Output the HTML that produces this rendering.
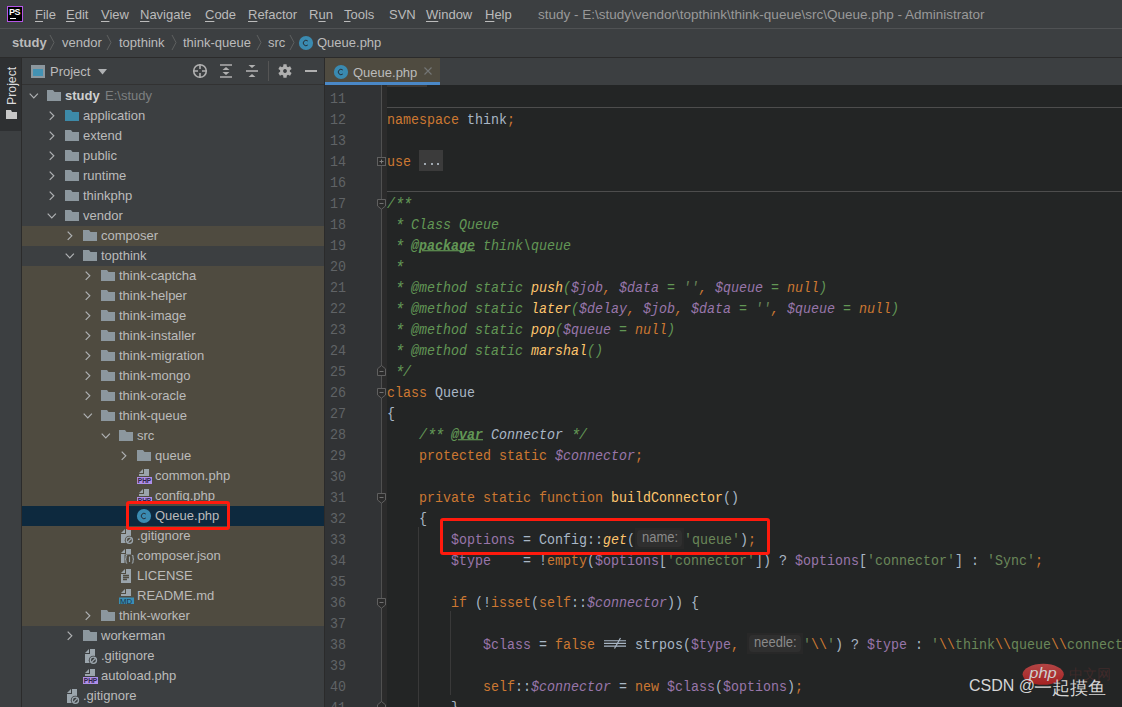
<!DOCTYPE html><html><head><meta charset="utf-8"><style>
*{margin:0;padding:0;box-sizing:border-box}
html,body{width:1122px;height:707px;overflow:hidden;background:#3c3f41;font-family:"Liberation Sans",sans-serif;font-size:13px;color:#bbbbbb}
.a{position:absolute;white-space:pre}
.ui{font-family:"Liberation Sans",sans-serif;font-size:13px}
.m{font-family:"Liberation Mono",monospace;font-size:13.333px;transform:scaleY(1.15);transform-origin:0 13px}
u{text-decoration:underline;text-underline-offset:2px}
.k{color:#cc7832} .d{color:#a9b7c6} .v{color:#9876aa} .f{color:#ffc66d} .s{color:#6a8759}
.c{color:#629755;font-style:italic} .i{font-style:italic} .st{position:relative;top:2px;font-size:15.5px;line-height:1px;display:inline-block;width:8px;text-align:center} .b{font-weight:bold}
.tag{text-decoration:underline;font-weight:bold;text-underline-offset:0px;text-decoration-thickness:1px}
.hint{background:#3b3b3b;color:#787878;font-family:"Liberation Sans",sans-serif;font-size:12px;border-radius:3px}
</style></head><body>
<div class="a" style="left:0;top:0;width:1122px;height:28px;background:#3c3f41"></div>
<div class="a" style="left:7px;top:6px;width:16px;height:16px;background:#000;border:1px solid #b456e6"></div>
<div class="a" style="left:9px;top:7px;font:bold 9px 'Liberation Sans',sans-serif;color:#fff;letter-spacing:-0.5px">PS</div>
<div class="a" style="left:10px;top:18px;width:6px;height:1px;background:#fff"></div>
<div class="a ui" style="left:35px;top:7px;color:#bbbbbb"><u>F</u>ile</div>
<div class="a ui" style="left:66px;top:7px;color:#bbbbbb"><u>E</u>dit</div>
<div class="a ui" style="left:101px;top:7px;color:#bbbbbb"><u>V</u>iew</div>
<div class="a ui" style="left:140px;top:7px;color:#bbbbbb"><u>N</u>avigate</div>
<div class="a ui" style="left:205px;top:7px;color:#bbbbbb"><u>C</u>ode</div>
<div class="a ui" style="left:248px;top:7px;color:#bbbbbb"><u>R</u>efactor</div>
<div class="a ui" style="left:309px;top:7px;color:#bbbbbb">R<u>u</u>n</div>
<div class="a ui" style="left:344px;top:7px;color:#bbbbbb"><u>T</u>ools</div>
<div class="a ui" style="left:389px;top:7px;color:#bbbbbb">SVN</div>
<div class="a ui" style="left:426px;top:7px;color:#bbbbbb"><u>W</u>indow</div>
<div class="a ui" style="left:485px;top:7px;color:#bbbbbb"><u>H</u>elp</div>
<div class="a ui" style="left:538px;top:7px;color:#999999;font-size:13.5px">study - E:\study\vendor\topthink\think-queue\src\Queue.php - Administrator</div>
<div class="a" style="left:0;top:28px;width:1122px;height:1px;background:#505254"></div>
<div class="a ui" style="left:12px;top:35px;color:#bbbbbb;font-weight:bold">study</div>
<div class="a ui" style="left:62px;top:35px;color:#bbbbbb;">vendor</div>
<div class="a ui" style="left:119px;top:35px;color:#bbbbbb;">topthink</div>
<div class="a ui" style="left:183px;top:35px;color:#bbbbbb;">think-queue</div>
<div class="a ui" style="left:268px;top:35px;color:#bbbbbb;">src</div>
<svg class="a" style="left:49px;top:34px" width="6" height="17"><path d="M1 1 L5 8.5 L1 16" fill="none" stroke="#5e6060" stroke-width="1"/></svg>
<svg class="a" style="left:106px;top:34px" width="6" height="17"><path d="M1 1 L5 8.5 L1 16" fill="none" stroke="#5e6060" stroke-width="1"/></svg>
<svg class="a" style="left:171px;top:34px" width="6" height="17"><path d="M1 1 L5 8.5 L1 16" fill="none" stroke="#5e6060" stroke-width="1"/></svg>
<svg class="a" style="left:256px;top:34px" width="6" height="17"><path d="M1 1 L5 8.5 L1 16" fill="none" stroke="#5e6060" stroke-width="1"/></svg>
<svg class="a" style="left:289px;top:34px" width="6" height="17"><path d="M1 1 L5 8.5 L1 16" fill="none" stroke="#5e6060" stroke-width="1"/></svg>
<svg class="a" style="left:299px;top:36px" width="14" height="14" viewBox="0 0 14 14" overflow="visible"><circle cx="7" cy="7" r="7.1" fill="#3a8ab0"/><path d="M8.8 5 A2.7 2.7 0 1 0 8.8 9" fill="none" stroke="#26323b" stroke-width="1"/></svg>
<div class="a ui" style="left:317px;top:35px;color:#bbbbbb">Queue.php</div>
<div class="a" style="left:0;top:57px;width:1122px;height:1px;background:#2b2b2b"></div>
<div class="a" style="left:0;top:58px;width:21px;height:649px;background:#3c3f41"></div>
<div class="a" style="left:0;top:58px;width:21px;height:73px;background:#2e3032"></div>
<div class="a" style="left:21px;top:58px;width:1px;height:649px;background:#2b2b2b"></div>
<div class="a ui" style="left:5px;top:105px;transform-origin:0 0;transform:rotate(-90deg);color:#dddddd;font-size:12.3px">Project</div>
<svg class="a" style="left:6px;top:110px" width="12" height="10"><path d="M0 0 H5 L6 2 H11 V9 H0 Z" fill="#c8c8c8"/></svg>
<div class="a" style="left:22px;top:58px;width:302px;height:649px;background:#3c3f41"></div>
<div class="a" style="left:22px;top:84px;width:302px;height:1px;background:#323232"></div>
<div class="a" style="left:324px;top:58px;width:1px;height:649px;background:#2b2b2b"></div>
<svg class="a" style="left:31px;top:65px" width="14" height="14"><path fill="#8c979e" fill-rule="evenodd" d="M0 0 H14 V13 H0 Z M2 4 V11 H12 V4 Z"/><rect x="2" y="4" width="10" height="7" fill="#4392b3"/></svg>
<div class="a ui" style="left:50px;top:64px;color:#bbbbbb">Project</div>
<svg class="a" style="left:98px;top:69px" width="10" height="6"><path d="M0 0 H9 L4.5 5.5 Z" fill="#afb1b3"/></svg>
<svg class="a" style="left:192px;top:63px" width="16" height="16"><circle cx="8" cy="8" r="6.3" fill="none" stroke="#b0b0b0" stroke-width="1.6"/><path d="M8 1 V6 M8 10 V15 M1 8 H6 M10 8 H15" stroke="#b0b0b0" stroke-width="1.6"/></svg>
<svg class="a" style="left:220px;top:64px" width="13" height="14"><path d="M0 1 H12 M0 13 H12" stroke="#b0b0b0" stroke-width="1.6"/><path d="M6 3 L9.5 6 H2.5 Z M6 11 L9.5 8 H2.5 Z" fill="#b0b0b0"/></svg>
<svg class="a" style="left:246px;top:64px" width="13" height="14"><path d="M0 7 H12" stroke="#b0b0b0" stroke-width="1.6"/><path d="M2.5 1 H9.5 L6 4 Z M6 10 L9.5 13 H2.5 Z" fill="#b0b0b0"/></svg>
<div class="a" style="left:268px;top:61px;width:1px;height:20px;background:#555555"></div>
<svg class="a" style="left:278px;top:64px" width="14" height="14" viewBox="0 0 14 14"><path fill="#b0b0b0" fill-rule="evenodd" d="M5.16 2.46 L5.45 0.28 L8.55 0.28 L8.84 2.46 L10.02 3.14 L12.05 2.29 L13.60 4.98 L11.85 6.32 L11.85 7.68 L13.60 9.02 L12.05 11.71 L10.02 10.86 L8.84 11.54 L8.55 13.72 L5.45 13.72 L5.16 11.54 L3.98 10.86 L1.95 11.71 L0.40 9.02 L2.15 7.68 L2.15 6.32 L0.40 4.98 L1.95 2.29 L3.98 3.14 Z M7 5.1 A1.9 1.9 0 1 0 7.01 5.1 Z"/></svg>
<div class="a" style="left:305px;top:70px;width:12px;height:2px;background:#b0b0b0"></div>
<svg class="a" style="left:29px;top:93px" width="10" height="7"><path d="M0.7 0.7 L4.8 4.8 L8.9 0.7" fill="none" stroke="#afb1b3" stroke-width="1.2"/></svg>
<svg class="a" style="left:47px;top:90px" width="14" height="12"><path d="M0 0 H6 L7.5 2 H14 V11 H0 Z" fill="#8c979e"/></svg>
<div class="a ui" style="left:65px;top:88px;color:#bbbbbb;font-weight:bold;color:#cfcfcf;">study</div>
<div class="a ui" style="left:105px;top:88px;color:#7d7f80">E:\study</div>
<svg class="a" style="left:49px;top:111px" width="7" height="10"><path d="M0.7 0.7 L4.8 4.8 L0.7 8.9" fill="none" stroke="#afb1b3" stroke-width="1.2"/></svg>
<svg class="a" style="left:65px;top:110px" width="14" height="12"><path d="M0 0 H6 L7.5 2 H14 V11 H0 Z" fill="#3d8aa8"/></svg>
<div class="a ui" style="left:83px;top:108px;color:#bbbbbb;">application</div>
<svg class="a" style="left:49px;top:131px" width="7" height="10"><path d="M0.7 0.7 L4.8 4.8 L0.7 8.9" fill="none" stroke="#afb1b3" stroke-width="1.2"/></svg>
<svg class="a" style="left:65px;top:130px" width="14" height="12"><path d="M0 0 H6 L7.5 2 H14 V11 H0 Z" fill="#8c979e"/></svg>
<div class="a ui" style="left:83px;top:128px;color:#bbbbbb;">extend</div>
<svg class="a" style="left:49px;top:151px" width="7" height="10"><path d="M0.7 0.7 L4.8 4.8 L0.7 8.9" fill="none" stroke="#afb1b3" stroke-width="1.2"/></svg>
<svg class="a" style="left:65px;top:150px" width="14" height="12"><path d="M0 0 H6 L7.5 2 H14 V11 H0 Z" fill="#8c979e"/></svg>
<div class="a ui" style="left:83px;top:148px;color:#bbbbbb;">public</div>
<svg class="a" style="left:49px;top:171px" width="7" height="10"><path d="M0.7 0.7 L4.8 4.8 L0.7 8.9" fill="none" stroke="#afb1b3" stroke-width="1.2"/></svg>
<svg class="a" style="left:65px;top:170px" width="14" height="12"><path d="M0 0 H6 L7.5 2 H14 V11 H0 Z" fill="#8c979e"/></svg>
<div class="a ui" style="left:83px;top:168px;color:#bbbbbb;">runtime</div>
<svg class="a" style="left:49px;top:191px" width="7" height="10"><path d="M0.7 0.7 L4.8 4.8 L0.7 8.9" fill="none" stroke="#afb1b3" stroke-width="1.2"/></svg>
<svg class="a" style="left:65px;top:190px" width="14" height="12"><path d="M0 0 H6 L7.5 2 H14 V11 H0 Z" fill="#8c979e"/></svg>
<div class="a ui" style="left:83px;top:188px;color:#bbbbbb;">thinkphp</div>
<svg class="a" style="left:47px;top:213px" width="10" height="7"><path d="M0.7 0.7 L4.8 4.8 L8.9 0.7" fill="none" stroke="#afb1b3" stroke-width="1.2"/></svg>
<svg class="a" style="left:65px;top:210px" width="14" height="12"><path d="M0 0 H6 L7.5 2 H14 V11 H0 Z" fill="#8c979e"/></svg>
<div class="a ui" style="left:83px;top:208px;color:#bbbbbb;">vendor</div>
<div class="a" style="left:22px;top:226px;width:302px;height:20px;background:#4f4b40"></div>
<svg class="a" style="left:67px;top:231px" width="7" height="10"><path d="M0.7 0.7 L4.8 4.8 L0.7 8.9" fill="none" stroke="#afb1b3" stroke-width="1.2"/></svg>
<svg class="a" style="left:83px;top:230px" width="14" height="12"><path d="M0 0 H6 L7.5 2 H14 V11 H0 Z" fill="#8c979e"/></svg>
<div class="a ui" style="left:101px;top:228px;color:#bbbbbb;">composer</div>
<svg class="a" style="left:65px;top:253px" width="10" height="7"><path d="M0.7 0.7 L4.8 4.8 L8.9 0.7" fill="none" stroke="#afb1b3" stroke-width="1.2"/></svg>
<svg class="a" style="left:83px;top:250px" width="14" height="12"><path d="M0 0 H6 L7.5 2 H14 V11 H0 Z" fill="#8c979e"/></svg>
<div class="a ui" style="left:101px;top:248px;color:#bbbbbb;">topthink</div>
<div class="a" style="left:22px;top:266px;width:302px;height:20px;background:#4f4b40"></div>
<svg class="a" style="left:85px;top:271px" width="7" height="10"><path d="M0.7 0.7 L4.8 4.8 L0.7 8.9" fill="none" stroke="#afb1b3" stroke-width="1.2"/></svg>
<svg class="a" style="left:101px;top:270px" width="14" height="12"><path d="M0 0 H6 L7.5 2 H14 V11 H0 Z" fill="#8c979e"/></svg>
<div class="a ui" style="left:119px;top:268px;color:#bbbbbb;">think-captcha</div>
<div class="a" style="left:22px;top:286px;width:302px;height:20px;background:#4f4b40"></div>
<svg class="a" style="left:85px;top:291px" width="7" height="10"><path d="M0.7 0.7 L4.8 4.8 L0.7 8.9" fill="none" stroke="#afb1b3" stroke-width="1.2"/></svg>
<svg class="a" style="left:101px;top:290px" width="14" height="12"><path d="M0 0 H6 L7.5 2 H14 V11 H0 Z" fill="#8c979e"/></svg>
<div class="a ui" style="left:119px;top:288px;color:#bbbbbb;">think-helper</div>
<div class="a" style="left:22px;top:306px;width:302px;height:20px;background:#4f4b40"></div>
<svg class="a" style="left:85px;top:311px" width="7" height="10"><path d="M0.7 0.7 L4.8 4.8 L0.7 8.9" fill="none" stroke="#afb1b3" stroke-width="1.2"/></svg>
<svg class="a" style="left:101px;top:310px" width="14" height="12"><path d="M0 0 H6 L7.5 2 H14 V11 H0 Z" fill="#8c979e"/></svg>
<div class="a ui" style="left:119px;top:308px;color:#bbbbbb;">think-image</div>
<div class="a" style="left:22px;top:326px;width:302px;height:20px;background:#4f4b40"></div>
<svg class="a" style="left:85px;top:331px" width="7" height="10"><path d="M0.7 0.7 L4.8 4.8 L0.7 8.9" fill="none" stroke="#afb1b3" stroke-width="1.2"/></svg>
<svg class="a" style="left:101px;top:330px" width="14" height="12"><path d="M0 0 H6 L7.5 2 H14 V11 H0 Z" fill="#8c979e"/></svg>
<div class="a ui" style="left:119px;top:328px;color:#bbbbbb;">think-installer</div>
<div class="a" style="left:22px;top:346px;width:302px;height:20px;background:#4f4b40"></div>
<svg class="a" style="left:85px;top:351px" width="7" height="10"><path d="M0.7 0.7 L4.8 4.8 L0.7 8.9" fill="none" stroke="#afb1b3" stroke-width="1.2"/></svg>
<svg class="a" style="left:101px;top:350px" width="14" height="12"><path d="M0 0 H6 L7.5 2 H14 V11 H0 Z" fill="#8c979e"/></svg>
<div class="a ui" style="left:119px;top:348px;color:#bbbbbb;">think-migration</div>
<div class="a" style="left:22px;top:366px;width:302px;height:20px;background:#4f4b40"></div>
<svg class="a" style="left:85px;top:371px" width="7" height="10"><path d="M0.7 0.7 L4.8 4.8 L0.7 8.9" fill="none" stroke="#afb1b3" stroke-width="1.2"/></svg>
<svg class="a" style="left:101px;top:370px" width="14" height="12"><path d="M0 0 H6 L7.5 2 H14 V11 H0 Z" fill="#8c979e"/></svg>
<div class="a ui" style="left:119px;top:368px;color:#bbbbbb;">think-mongo</div>
<div class="a" style="left:22px;top:386px;width:302px;height:20px;background:#4f4b40"></div>
<svg class="a" style="left:85px;top:391px" width="7" height="10"><path d="M0.7 0.7 L4.8 4.8 L0.7 8.9" fill="none" stroke="#afb1b3" stroke-width="1.2"/></svg>
<svg class="a" style="left:101px;top:390px" width="14" height="12"><path d="M0 0 H6 L7.5 2 H14 V11 H0 Z" fill="#8c979e"/></svg>
<div class="a ui" style="left:119px;top:388px;color:#bbbbbb;">think-oracle</div>
<div class="a" style="left:22px;top:406px;width:302px;height:20px;background:#4f4b40"></div>
<svg class="a" style="left:83px;top:413px" width="10" height="7"><path d="M0.7 0.7 L4.8 4.8 L8.9 0.7" fill="none" stroke="#afb1b3" stroke-width="1.2"/></svg>
<svg class="a" style="left:101px;top:410px" width="14" height="12"><path d="M0 0 H6 L7.5 2 H14 V11 H0 Z" fill="#8c979e"/></svg>
<div class="a ui" style="left:119px;top:408px;color:#bbbbbb;">think-queue</div>
<div class="a" style="left:22px;top:426px;width:302px;height:20px;background:#4f4b40"></div>
<svg class="a" style="left:101px;top:433px" width="10" height="7"><path d="M0.7 0.7 L4.8 4.8 L8.9 0.7" fill="none" stroke="#afb1b3" stroke-width="1.2"/></svg>
<svg class="a" style="left:119px;top:430px" width="14" height="12"><path d="M0 0 H6 L7.5 2 H14 V11 H0 Z" fill="#8c979e"/></svg>
<div class="a ui" style="left:137px;top:428px;color:#bbbbbb;">src</div>
<div class="a" style="left:22px;top:446px;width:302px;height:20px;background:#4f4b40"></div>
<svg class="a" style="left:121px;top:451px" width="7" height="10"><path d="M0.7 0.7 L4.8 4.8 L0.7 8.9" fill="none" stroke="#afb1b3" stroke-width="1.2"/></svg>
<svg class="a" style="left:137px;top:450px" width="14" height="12"><path d="M0 0 H6 L7.5 2 H14 V11 H0 Z" fill="#8c979e"/></svg>
<div class="a ui" style="left:155px;top:448px;color:#bbbbbb;">queue</div>
<div class="a" style="left:22px;top:466px;width:302px;height:20px;background:#4f4b40"></div>
<svg class="a" style="left:137px;top:466px" width="18" height="20" overflow="visible"><path d="M7 3 H12 V10 H2 V8 H7 Z" fill="#9ba5ac"/><path d="M2 7 L6 3 V7 Z" fill="#9ba5ac"/><rect x="0" y="11" width="15" height="7" fill="#ae8ee8"/><text x="7.5" y="17.3" text-anchor="middle" font-family="Liberation Sans" font-weight="bold" font-size="8" fill="#2f2447" textLength="13.5" lengthAdjust="spacingAndGlyphs">PHP</text></svg>
<div class="a ui" style="left:155px;top:468px;color:#bbbbbb;">common.php</div>
<div class="a" style="left:22px;top:486px;width:302px;height:20px;background:#4f4b40"></div>
<svg class="a" style="left:137px;top:486px" width="18" height="20" overflow="visible"><path d="M7 3 H12 V10 H2 V8 H7 Z" fill="#9ba5ac"/><path d="M2 7 L6 3 V7 Z" fill="#9ba5ac"/><rect x="0" y="11" width="15" height="7" fill="#ae8ee8"/><text x="7.5" y="17.3" text-anchor="middle" font-family="Liberation Sans" font-weight="bold" font-size="8" fill="#2f2447" textLength="13.5" lengthAdjust="spacingAndGlyphs">PHP</text></svg>
<div class="a ui" style="left:155px;top:488px;color:#bbbbbb;">config.php</div>
<div class="a" style="left:22px;top:506px;width:302px;height:20px;background:#0d293e"></div>
<svg class="a" style="left:137px;top:509px" width="14" height="14" viewBox="0 0 14 14" overflow="visible"><circle cx="7" cy="7" r="7.1" fill="#3a8ab0"/><path d="M8.8 5 A2.7 2.7 0 1 0 8.8 9" fill="none" stroke="#26323b" stroke-width="1"/></svg>
<div class="a ui" style="left:155px;top:508px;color:#bbbbbb;">Queue.php</div>
<div class="a" style="left:22px;top:526px;width:302px;height:20px;background:#4f4b40"></div>
<svg class="a" style="left:119px;top:526px" width="18" height="20" overflow="visible"><path d="M7 3 H12 V17 H2 V8 H7 Z" fill="#9ba5ac"/><path d="M2 7 L6 3 V7 Z" fill="#9ba5ac"/><circle cx="10.4" cy="14.3" r="4.6" fill="#4f4b40"/><circle cx="10.4" cy="14.3" r="3.1" fill="none" stroke="#9ba5ac" stroke-width="1.3"/><path d="M8.3 16.4 L12.5 12.2" stroke="#9ba5ac" stroke-width="1.3"/></svg>
<div class="a ui" style="left:137px;top:528px;color:#bbbbbb;">.gitignore</div>
<div class="a" style="left:22px;top:546px;width:302px;height:20px;background:#4f4b40"></div>
<svg class="a" style="left:119px;top:546px" width="18" height="20" overflow="visible"><path d="M7 3 H12 V17 H2 V8 H7 Z" fill="#9ba5ac"/><path d="M2 7 L6 3 V7 Z" fill="#9ba5ac"/><rect x="5.5" y="8.5" width="10" height="10" fill="#4f4b40"/><path d="M8.2 9.2 Q6.8 9.2 7 11 Q7.2 13 6 13.2 Q7.2 13.4 7 15.4 Q6.8 17.2 8.2 17.2 M12.8 9.2 Q14.2 9.2 14 11 Q13.8 13 15 13.2 Q13.8 13.4 14 15.4 Q14.2 17.2 12.8 17.2" fill="none" stroke="#9ba5ac" stroke-width="1.1"/><path d="M10.5 10.5 V16" stroke="#9ba5ac" stroke-width="1.2"/></svg>
<div class="a ui" style="left:137px;top:548px;color:#bbbbbb;">composer.json</div>
<div class="a" style="left:22px;top:566px;width:302px;height:20px;background:#4f4b40"></div>
<svg class="a" style="left:119px;top:566px" width="18" height="20" overflow="visible"><path d="M7 3 H12 V17 H2 V8 H7 Z" fill="#9ba5ac"/><path d="M2 7 L6 3 V7 Z" fill="#9ba5ac"/><path d="M4 9.5 H10 M4 11.5 H10 M4 13.5 H8" stroke="#4f4b40" stroke-width="1.3"/></svg>
<div class="a ui" style="left:137px;top:568px;color:#bbbbbb;">LICENSE</div>
<div class="a" style="left:22px;top:586px;width:302px;height:20px;background:#4f4b40"></div>
<svg class="a" style="left:119px;top:586px" width="18" height="20" overflow="visible"><path d="M7 3 H12 V10 H2 V8 H7 Z" fill="#9ba5ac"/><path d="M2 7 L6 3 V7 Z" fill="#9ba5ac"/><rect x="0" y="11.5" width="15" height="6.5" fill="#3a8eb5"/><text x="7" y="17.6" text-anchor="middle" font-family="Liberation Sans" font-size="7.5" fill="#1c2f3d" textLength="12" lengthAdjust="spacingAndGlyphs">MD</text></svg>
<div class="a ui" style="left:137px;top:588px;color:#bbbbbb;">README.md</div>
<div class="a" style="left:22px;top:606px;width:302px;height:20px;background:#4f4b40"></div>
<svg class="a" style="left:85px;top:611px" width="7" height="10"><path d="M0.7 0.7 L4.8 4.8 L0.7 8.9" fill="none" stroke="#afb1b3" stroke-width="1.2"/></svg>
<svg class="a" style="left:101px;top:610px" width="14" height="12"><path d="M0 0 H6 L7.5 2 H14 V11 H0 Z" fill="#8c979e"/></svg>
<div class="a ui" style="left:119px;top:608px;color:#bbbbbb;">think-worker</div>
<svg class="a" style="left:67px;top:631px" width="7" height="10"><path d="M0.7 0.7 L4.8 4.8 L0.7 8.9" fill="none" stroke="#afb1b3" stroke-width="1.2"/></svg>
<svg class="a" style="left:83px;top:630px" width="14" height="12"><path d="M0 0 H6 L7.5 2 H14 V11 H0 Z" fill="#8c979e"/></svg>
<div class="a ui" style="left:101px;top:628px;color:#bbbbbb;">workerman</div>
<svg class="a" style="left:83px;top:646px" width="18" height="20" overflow="visible"><path d="M7 3 H12 V17 H2 V8 H7 Z" fill="#9ba5ac"/><path d="M2 7 L6 3 V7 Z" fill="#9ba5ac"/><circle cx="10.4" cy="14.3" r="4.6" fill="#3c3f41"/><circle cx="10.4" cy="14.3" r="3.1" fill="none" stroke="#9ba5ac" stroke-width="1.3"/><path d="M8.3 16.4 L12.5 12.2" stroke="#9ba5ac" stroke-width="1.3"/></svg>
<div class="a ui" style="left:101px;top:648px;color:#bbbbbb;">.gitignore</div>
<svg class="a" style="left:83px;top:666px" width="18" height="20" overflow="visible"><path d="M7 3 H12 V10 H2 V8 H7 Z" fill="#9ba5ac"/><path d="M2 7 L6 3 V7 Z" fill="#9ba5ac"/><rect x="0" y="11" width="15" height="7" fill="#ae8ee8"/><text x="7.5" y="17.3" text-anchor="middle" font-family="Liberation Sans" font-weight="bold" font-size="8" fill="#2f2447" textLength="13.5" lengthAdjust="spacingAndGlyphs">PHP</text></svg>
<div class="a ui" style="left:101px;top:668px;color:#bbbbbb;">autoload.php</div>
<svg class="a" style="left:65px;top:686px" width="18" height="20" overflow="visible"><path d="M7 3 H12 V17 H2 V8 H7 Z" fill="#9ba5ac"/><path d="M2 7 L6 3 V7 Z" fill="#9ba5ac"/><circle cx="10.4" cy="14.3" r="4.6" fill="#3c3f41"/><circle cx="10.4" cy="14.3" r="3.1" fill="none" stroke="#9ba5ac" stroke-width="1.3"/><path d="M8.3 16.4 L12.5 12.2" stroke="#9ba5ac" stroke-width="1.3"/></svg>
<div class="a ui" style="left:83px;top:688px;color:#bbbbbb;">.gitignore</div>
<div class="a" style="left:126px;top:501px;width:104px;height:29px;border:3px solid #ff1a0d;border-radius:3px"></div>
<div class="a" style="left:325px;top:58px;width:797px;height:27px;background:#3c3f41"></div>
<div class="a" style="left:325px;top:58px;width:115px;height:24px;background:#4f4b40"></div>
<div class="a" style="left:325px;top:82px;width:115px;height:3px;background:#4a88c7"></div>
<svg class="a" style="left:334px;top:65px" width="14" height="14" viewBox="0 0 14 14" overflow="visible"><circle cx="7" cy="7" r="7.1" fill="#3a8ab0"/><path d="M8.8 5 A2.7 2.7 0 1 0 8.8 9" fill="none" stroke="#26323b" stroke-width="1"/></svg>
<div class="a ui" style="left:353px;top:65px;color:#bbbbbb">Queue.php</div>
<svg class="a" style="left:423px;top:66px" width="10" height="10"><path d="M1.5 1.5 L8.5 8.5 M8.5 1.5 L1.5 8.5" stroke="#747676" stroke-width="1.1"/></svg>
<div class="a" style="left:325px;top:85px;width:797px;height:622px;background:#232525"></div>
<div class="a" style="left:325px;top:85px;width:56px;height:622px;background:#313335"></div>
<div class="a" style="left:381px;top:85px;width:1px;height:622px;background:#505050"></div>
<div class="a" style="left:382px;top:85px;width:5px;height:622px;background:#2b2b2b"></div>
<div class="a" style="left:387px;top:85px;width:40px;height:2px;background:#3a3836"></div>
<div class="a" style="left:387px;top:107px;width:735px;height:1px;background:#4d4d4d"></div>
<div class="a" style="left:387px;top:191px;width:735px;height:1px;background:#4d4d4d"></div>
<div class="a m" style="left:330px;top:89px;height:21px;line-height:21px;color:#606366">11</div>
<div class="a m" style="left:387px;top:89px;height:21px;line-height:21px;color:#a9b7c6"></div>
<div class="a m" style="left:330px;top:110px;height:21px;line-height:21px;color:#606366">12</div>
<div class="a m" style="left:387px;top:110px;height:21px;line-height:21px;color:#a9b7c6"><span class="k">namespace</span> <span class="d">think</span><span class="k">;</span></div>
<div class="a m" style="left:330px;top:131px;height:21px;line-height:21px;color:#606366">13</div>
<div class="a m" style="left:387px;top:131px;height:21px;line-height:21px;color:#a9b7c6"></div>
<div class="a m" style="left:330px;top:152px;height:21px;line-height:21px;color:#606366">14</div>
<div class="a m" style="left:387px;top:152px;height:21px;line-height:21px;color:#a9b7c6"><span class="k">use</span></div>
<div class="a m" style="left:330px;top:173px;height:21px;line-height:21px;color:#606366">16</div>
<div class="a m" style="left:387px;top:173px;height:21px;line-height:21px;color:#a9b7c6"></div>
<div class="a m" style="left:330px;top:194px;height:21px;line-height:21px;color:#606366">17</div>
<div class="a m" style="left:387px;top:194px;height:21px;line-height:21px;color:#a9b7c6"><span class="c">/<span class="st">*</span><span class="st">*</span></span></div>
<div class="a m" style="left:330px;top:215px;height:21px;line-height:21px;color:#606366">18</div>
<div class="a m" style="left:387px;top:215px;height:21px;line-height:21px;color:#a9b7c6"><span class="c"> <span class="st">*</span> Class Queue</span></div>
<div class="a m" style="left:330px;top:236px;height:21px;line-height:21px;color:#606366">19</div>
<div class="a m" style="left:387px;top:236px;height:21px;line-height:21px;color:#a9b7c6"><span class="c"> <span class="st">*</span> </span><span class="c tag">@package</span><span class="c"> think\queue</span></div>
<div class="a m" style="left:330px;top:257px;height:21px;line-height:21px;color:#606366">20</div>
<div class="a m" style="left:387px;top:257px;height:21px;line-height:21px;color:#a9b7c6"><span class="c"> <span class="st">*</span></span></div>
<div class="a m" style="left:330px;top:278px;height:21px;line-height:21px;color:#606366">21</div>
<div class="a m" style="left:387px;top:278px;height:21px;line-height:21px;color:#a9b7c6"><span class="c"> <span class="st">*</span> @method static </span><span class="f i">push</span><span class="c">(</span><span class="v i">$job</span><span class="k i">,</span><span class="c"> </span><span class="v i">$data</span><span class="c"> = </span><span class="s i">&#x27;&#x27;</span><span class="k i">,</span><span class="c"> </span><span class="v i">$queue</span><span class="c"> = </span><span class="k i">null</span><span class="c">)</span></div>
<div class="a m" style="left:330px;top:299px;height:21px;line-height:21px;color:#606366">22</div>
<div class="a m" style="left:387px;top:299px;height:21px;line-height:21px;color:#a9b7c6"><span class="c"> <span class="st">*</span> @method static </span><span class="f i">later</span><span class="c">(</span><span class="v i">$delay</span><span class="k i">,</span><span class="c"> </span><span class="v i">$job</span><span class="k i">,</span><span class="c"> </span><span class="v i">$data</span><span class="c"> = </span><span class="s i">&#x27;&#x27;</span><span class="k i">,</span><span class="c"> </span><span class="v i">$queue</span><span class="c"> = </span><span class="k i">null</span><span class="c">)</span></div>
<div class="a m" style="left:330px;top:320px;height:21px;line-height:21px;color:#606366">23</div>
<div class="a m" style="left:387px;top:320px;height:21px;line-height:21px;color:#a9b7c6"><span class="c"> <span class="st">*</span> @method static </span><span class="f i">pop</span><span class="c">(</span><span class="v i">$queue</span><span class="c"> = </span><span class="k i">null</span><span class="c">)</span></div>
<div class="a m" style="left:330px;top:341px;height:21px;line-height:21px;color:#606366">24</div>
<div class="a m" style="left:387px;top:341px;height:21px;line-height:21px;color:#a9b7c6"><span class="c"> <span class="st">*</span> @method static </span><span class="f i">marshal</span><span class="c">()</span></div>
<div class="a m" style="left:330px;top:362px;height:21px;line-height:21px;color:#606366">25</div>
<div class="a m" style="left:387px;top:362px;height:21px;line-height:21px;color:#a9b7c6"><span class="c"> <span class="st">*</span>/</span></div>
<div class="a m" style="left:330px;top:383px;height:21px;line-height:21px;color:#606366">26</div>
<div class="a m" style="left:387px;top:383px;height:21px;line-height:21px;color:#a9b7c6"><span class="k">class</span> <span class="d">Queue</span></div>
<div class="a m" style="left:330px;top:404px;height:21px;line-height:21px;color:#606366">27</div>
<div class="a m" style="left:387px;top:404px;height:21px;line-height:21px;color:#a9b7c6"><span class="d">{</span></div>
<div class="a m" style="left:330px;top:425px;height:21px;line-height:21px;color:#606366">28</div>
<div class="a m" style="left:387px;top:425px;height:21px;line-height:21px;color:#a9b7c6">    <span class="c">/<span class="st">*</span><span class="st">*</span> </span><span class="c tag">@var</span><span class="c"> </span><span class="d i">Connector</span><span class="c"> <span class="st">*</span>/</span></div>
<div class="a m" style="left:330px;top:446px;height:21px;line-height:21px;color:#606366">29</div>
<div class="a m" style="left:387px;top:446px;height:21px;line-height:21px;color:#a9b7c6">    <span class="k">protected static</span> <span class="v i">$connector</span><span class="k">;</span></div>
<div class="a m" style="left:330px;top:467px;height:21px;line-height:21px;color:#606366">30</div>
<div class="a m" style="left:387px;top:467px;height:21px;line-height:21px;color:#a9b7c6"></div>
<div class="a m" style="left:330px;top:488px;height:21px;line-height:21px;color:#606366">31</div>
<div class="a m" style="left:387px;top:488px;height:21px;line-height:21px;color:#a9b7c6">    <span class="k">private static function</span> <span class="f">buildConnector</span><span class="d">()</span></div>
<div class="a m" style="left:330px;top:509px;height:21px;line-height:21px;color:#606366">32</div>
<div class="a m" style="left:387px;top:509px;height:21px;line-height:21px;color:#a9b7c6">    <span class="d">{</span></div>
<div class="a m" style="left:330px;top:530px;height:21px;line-height:21px;color:#606366">33</div>
<div class="a m" style="left:387px;top:530px;height:21px;line-height:21px;color:#a9b7c6">        <span class="v">$options</span><span class="d"> = Config::</span><span class="f i">get</span><span class="d">(</span><span style="display:inline-block;width:49px"></span><span class="s">&#x27;queue&#x27;</span><span class="d">)</span><span class="k">;</span></div>
<div class="a m" style="left:330px;top:551px;height:21px;line-height:21px;color:#606366">34</div>
<div class="a m" style="left:387px;top:551px;height:21px;line-height:21px;color:#a9b7c6">        <span class="v">$type</span><span class="d">    = !</span><span class="k">empty</span><span class="d">(</span><span class="v">$options</span><span class="d">[</span><span class="s">&#x27;connector&#x27;</span><span class="d">]) ? </span><span class="v">$options</span><span class="d">[</span><span class="s">&#x27;connector&#x27;</span><span class="d">] : </span><span class="s">&#x27;Sync&#x27;</span><span class="k">;</span></div>
<div class="a m" style="left:330px;top:572px;height:21px;line-height:21px;color:#606366">35</div>
<div class="a m" style="left:387px;top:572px;height:21px;line-height:21px;color:#a9b7c6"></div>
<div class="a m" style="left:330px;top:593px;height:21px;line-height:21px;color:#606366">36</div>
<div class="a m" style="left:387px;top:593px;height:21px;line-height:21px;color:#a9b7c6">        <span class="k">if</span><span class="d"> (!</span><span class="k">isset</span><span class="d">(</span><span class="k">self</span><span class="d">::</span><span class="v i">$connector</span><span class="d">)) {</span></div>
<div class="a m" style="left:330px;top:614px;height:21px;line-height:21px;color:#606366">37</div>
<div class="a m" style="left:387px;top:614px;height:21px;line-height:21px;color:#a9b7c6"></div>
<div class="a m" style="left:330px;top:635px;height:21px;line-height:21px;color:#606366">38</div>
<div class="a m" style="left:387px;top:635px;height:21px;line-height:21px;color:#a9b7c6">            <span class="v">$class</span><span class="d"> = </span><span class="k">false</span><span class="d">     strpos(</span><span class="v">$type</span><span class="k">,</span> <span style="display:inline-block;width:56px"></span><span class="s">&#x27;</span><span class="k">\\</span><span class="s">&#x27;</span><span class="d">) ? </span><span class="v">$type</span><span class="d"> : </span><span class="s">&#x27;</span><span class="k">\\</span><span class="s">think</span><span class="k">\\</span><span class="s">queue</span><span class="k">\\</span><span class="s">connector</span><span class="k">\\</span><span class="s">&#x27;</span></div>
<div class="a m" style="left:330px;top:656px;height:21px;line-height:21px;color:#606366">39</div>
<div class="a m" style="left:387px;top:656px;height:21px;line-height:21px;color:#a9b7c6"></div>
<div class="a m" style="left:330px;top:677px;height:21px;line-height:21px;color:#606366">40</div>
<div class="a m" style="left:387px;top:677px;height:21px;line-height:21px;color:#a9b7c6">            <span class="k">self</span><span class="d">::</span><span class="v i">$connector</span><span class="d"> = </span><span class="k">new</span> <span class="v">$class</span><span class="d">(</span><span class="v">$options</span><span class="d">)</span><span class="k">;</span></div>
<div class="a m" style="left:330px;top:698px;height:21px;line-height:21px;color:#606366">41</div>
<div class="a m" style="left:387px;top:698px;height:21px;line-height:21px;color:#a9b7c6">        <span class="d">}</span></div>
<div class="a" style="left:419px;top:150px;width:24px;height:21px;background:#3b3b3b"></div>
<div class="a" style="left:424px;top:163px;width:2px;height:2px;background:#a0a8b0"></div>
<div class="a" style="left:431px;top:163px;width:2px;height:2px;background:#a0a8b0"></div>
<div class="a" style="left:437px;top:163px;width:2px;height:2px;background:#a0a8b0"></div>
<svg class="a" style="left:376px;top:156px" width="11" height="12"><rect x="1.5" y="1.5" width="8" height="8" fill="#2b2b2b" stroke="#606060"/><path d="M3.5 5.5 H7.5 M5.5 3.5 V7.5" stroke="#808080"/></svg>
<svg class="a" style="left:376px;top:198px" width="11" height="13"><path d="M1.5 1.5 H9.5 V8 L5.5 11.2 L1.5 8 Z" fill="#2b2b2b" stroke="#606060"/><path d="M3.5 5.5 H7.5" stroke="#707070"/></svg>
<svg class="a" style="left:376px;top:364px" width="11" height="13"><path d="M1.5 11.5 H9.5 V4.8 L5.5 1.5 L1.5 4.8 Z" fill="#2b2b2b" stroke="#606060"/><path d="M3.5 7.5 H7.5" stroke="#707070"/></svg>
<svg class="a" style="left:376px;top:387px" width="11" height="13"><path d="M1.5 1.5 H9.5 V8 L5.5 11.2 L1.5 8 Z" fill="#2b2b2b" stroke="#606060"/><path d="M3.5 5.5 H7.5" stroke="#707070"/></svg>
<svg class="a" style="left:376px;top:492px" width="11" height="13"><path d="M1.5 1.5 H9.5 V8 L5.5 11.2 L1.5 8 Z" fill="#2b2b2b" stroke="#606060"/><path d="M3.5 5.5 H7.5" stroke="#707070"/></svg>
<svg class="a" style="left:376px;top:597px" width="11" height="13"><path d="M1.5 1.5 H9.5 V8 L5.5 11.2 L1.5 8 Z" fill="#2b2b2b" stroke="#606060"/><path d="M3.5 5.5 H7.5" stroke="#707070"/></svg>
<svg class="a" style="left:376px;top:700px" width="11" height="13"><path d="M1.5 11.5 H9.5 V4.8 L5.5 1.5 L1.5 4.8 Z" fill="#2b2b2b" stroke="#606060"/><path d="M3.5 7.5 H7.5" stroke="#707070"/></svg>
<div class="a" style="left:418px;top:527px;width:1px;height:180px;background:#393939"></div>
<div class="a" style="left:450px;top:611px;width:1px;height:84px;background:#393939"></div>
<div class="a" style="left:635px;top:528px;width:49px;height:21px;background:#282828"></div>
<div class="a" style="left:637px;top:530px;width:45px;height:17px;background:#2f2f2f;border-radius:4px"></div>
<div class="a ui" style="left:642px;top:529px;height:17px;line-height:17px;font-size:13px;color:#8a8a8a;transform:scaleY(1.1);transform-origin:0 13px">name:</div>
<div class="a" style="left:747px;top:633px;width:56px;height:21px;background:#282828"></div>
<div class="a" style="left:749px;top:635px;width:52px;height:17px;background:#2f2f2f;border-radius:4px"></div>
<div class="a ui" style="left:754px;top:634px;height:17px;line-height:17px;font-size:13px;color:#8a8a8a;transform:scaleY(1.1);transform-origin:0 13px">needle:</div>
<svg class="a" style="left:603px;top:632px" width="24" height="21"><path d="M1 8.7 H23 M1 11.4 H23 M1 14.1 H23" stroke="#a9b7c6" stroke-width="1.1"/><path d="M11.5 16.5 L17.5 6" stroke="#a9b7c6" stroke-width="1.2"/></svg>
<div class="a" style="left:440px;top:518px;width:330px;height:37px;border:3px solid #ff1a0d;border-radius:3px"></div>
<svg class="a" style="left:1020px;top:662px" width="46" height="25"><defs><linearGradient id="pg" x1="0" y1="0" x2="0" y2="1"><stop offset="0" stop-color="#b24545"/><stop offset="1" stop-color="#a52222"/></linearGradient></defs><ellipse cx="23.2" cy="12.3" rx="20.6" ry="10.5" fill="url(#pg)"/><text x="23" y="15.8" text-anchor="middle" font-family="Liberation Sans" font-style="italic" font-size="15.5" fill="#cfcfcf" textLength="27.5" lengthAdjust="spacingAndGlyphs">php</text></svg>
<div class="a" style="left:1069px;top:666px;font-size:14px;line-height:16px;color:#3f2a2a">中文网</div>
<div class="a" style="left:969px;top:677px;font-size:16px;color:#d6d6d6">CSDN @</div>
<div class="a" style="left:1034px;top:678px;font-size:17.8px;line-height:20px;color:#d6d6d6">一起摸鱼</div>
</body></html>
